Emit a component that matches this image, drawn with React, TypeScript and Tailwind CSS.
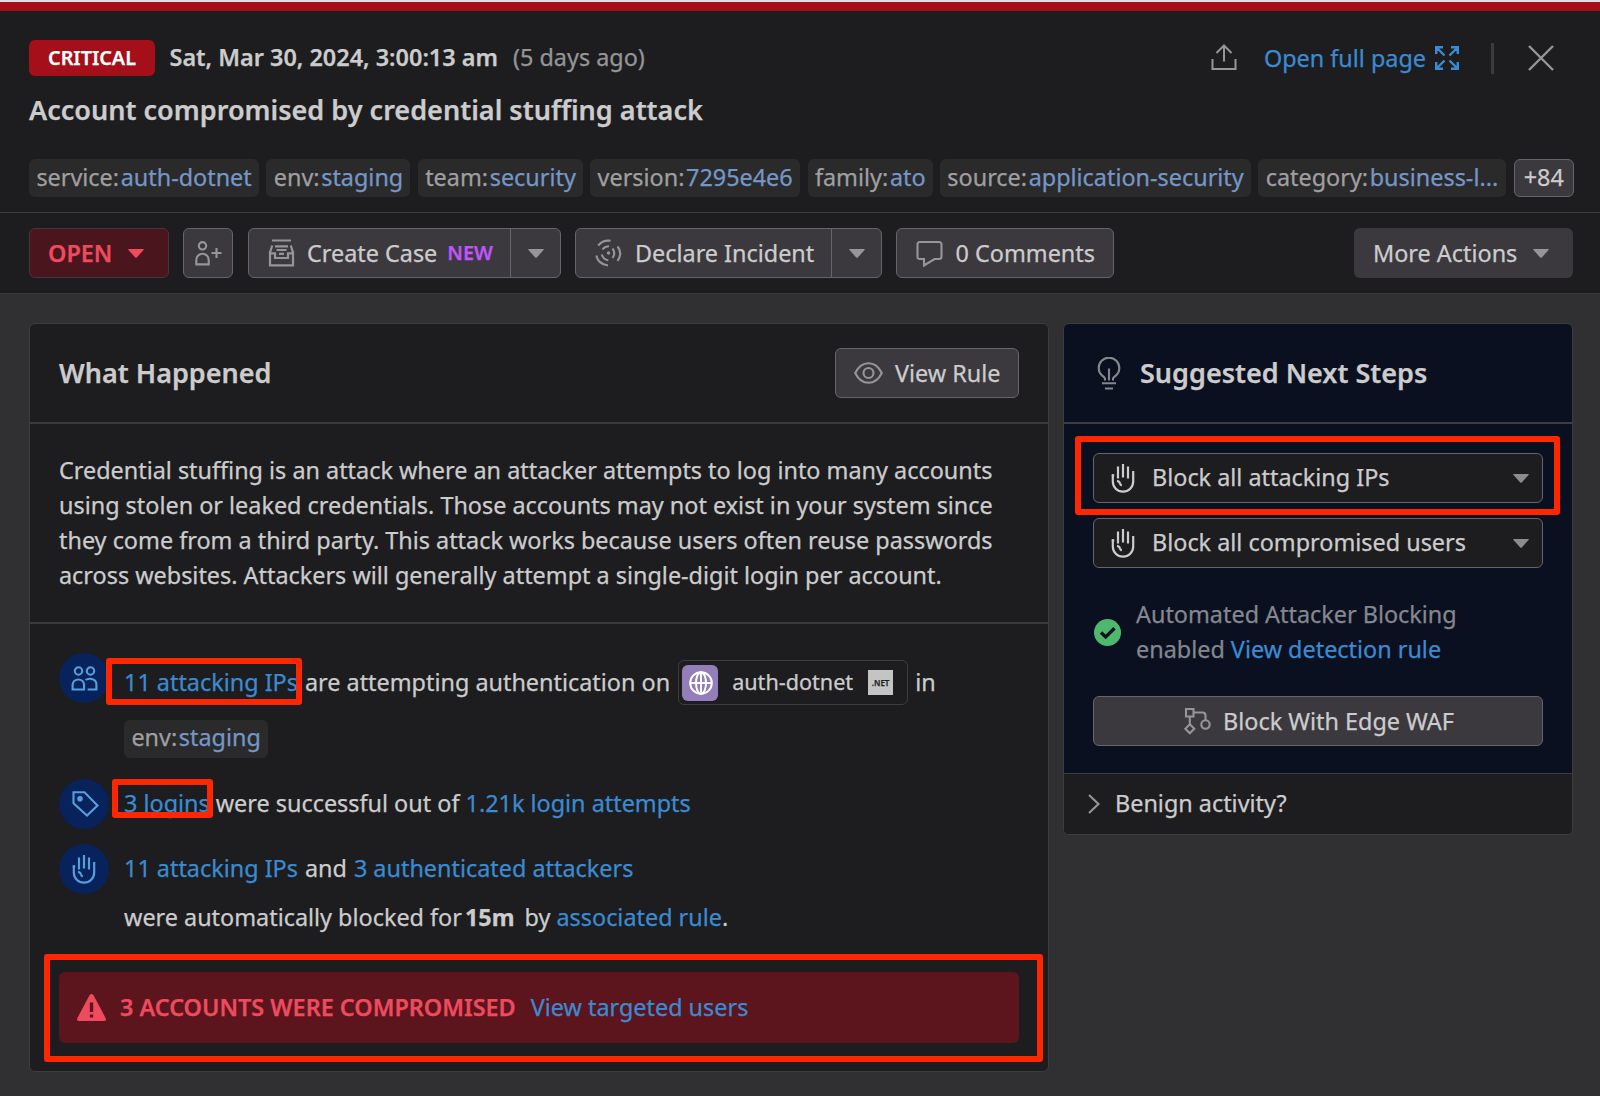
import React from "react";

type IconProps = { className?: string };

const Caret = ({ className = "" }: IconProps) => (
  <svg viewBox="0 0 16 9" className={`h-[9px] w-4 shrink-0 ${className}`} fill="currentColor">
    <path d="M0.8 0H15.2Q16.4 0 15.5 1L9 8.3Q8 9.4 7 8.3L0.5 1Q-0.4 0 0.8 0Z" />
  </svg>
);

const HandIcon = ({ className = "" }: IconProps) => (
  <svg viewBox="0 0 24 29" className={`h-[29px] w-6 shrink-0 ${className}`} fill="none" stroke="currentColor" strokeWidth="2.2">
    <path d="M1.8 10.5V17.5A10.2 10.2 0 0 0 22.2 17.5V7" />
    <path d="M7 14.5V2.5M12 13.5V0M17 14.5V2.5" />
    <path d="M0.8 11.4H3.2M6 16.8Q8.5 17.2 9 19.5Q9.4 21 10.8 21.5" />
  </svg>
);

const ShareIcon = () => (
  <svg viewBox="0 0 26 27" className="mb-[2px] h-[27px] w-[26px] shrink-0" fill="none" stroke="currentColor" strokeWidth="2">
    <path d="M1.5 15V25H24.5V15M13 17.5V2M5.5 9L13 1.5L20.5 9" />
  </svg>
);

const ExpandIcon = () => (
  <svg viewBox="0 0 24 24" className="size-6 shrink-0" fill="none" stroke="currentColor" strokeWidth="2.4">
    <path d="M1.2 8V1.2H8M1.5 1.5L9.5 9.5M16 1.2H22.8V8M22.5 1.5L14.5 9.5M1.2 16V22.8H8M1.5 22.5L9.5 14.5M16 22.8H22.8V16M22.5 22.5L14.5 14.5" />
  </svg>
);

const CloseIcon = () => (
  <svg viewBox="0 0 26 26" className="size-[26px] shrink-0" fill="none" stroke="currentColor" strokeWidth="2.4">
    <path d="M1 1L25 25M25 1L1 25" />
  </svg>
);

const AddUserIcon = () => (
  <svg viewBox="0 0 28 26" className="h-[26px] w-7 shrink-0" fill="none" stroke="currentColor" strokeWidth="2.1">
    <circle cx="8.5" cy="5.8" r="3.7" />
    <path d="M2.3 24.4V20A6.2 6.2 0 0 1 14.7 20V24.4ZM17.5 13H27.5M22.5 8V18" />
  </svg>
);

const CaseIcon = () => (
  <svg viewBox="0 0 27 28" className="h-7 w-[27px] shrink-0" fill="none" stroke="currentColor" strokeWidth="2.2">
    <path d="M4 1.5H23M7 7.3H20M4.2 6.5L2.2 13M22.8 6.5L24.8 13M2 12V26.4H25V12M2 14.4H7V19H20V14.4H25M8.5 11H18.5M11 14.8H16" />
  </svg>
);

const SignalIcon = () => (
  <svg viewBox="0 0 27 28" className="h-7 w-[27px] shrink-0" fill="none" stroke="currentColor" strokeWidth="2.1">
    <circle cx="13.5" cy="14" r="1.7" fill="currentColor" stroke="none" />
    <path d="M3.2 6.5Q8 0.8 15.5 1.8M1.3 16.5Q3 25 13 26.5M22.5 7.5Q28 14 22.5 22M7.5 10.5Q10 7 14 7.2M6.8 15.5Q8.2 20.5 13.3 21.3M17.5 9.5Q21 14 17.5 19" />
  </svg>
);

const CommentIcon = () => (
  <svg viewBox="0 0 27 27" className="size-[27px] shrink-0" fill="none" stroke="currentColor" strokeWidth="2.1">
    <path d="M4 2H23Q25.5 2 25.5 4.5V16.5Q25.5 19 23 19H18.5L8 25.5V19H4Q1.5 19 1.5 16.5V4.5Q1.5 2 4 2Z" />
  </svg>
);

const EyeIcon = () => (
  <svg viewBox="0 0 29 22" className="h-[22px] w-[29px] shrink-0" fill="none" stroke="currentColor" strokeWidth="2.1">
    <path d="M1.2 11Q6 1.2 14.5 1.2T27.8 11Q23 20.8 14.5 20.8T1.2 11Z" />
    <circle cx="14.5" cy="11" r="5" />
  </svg>
);

const BulbIcon = () => (
  <svg viewBox="0 0 24 33" className="h-[33px] w-6 shrink-0" fill="none" stroke="currentColor" strokeWidth="2.1">
    <path d="M8 23.5V21.5Q7.5 20 5 18.5A10.3 10.3 0 1 1 19 18.5Q16.5 20 16 21.5V23.5M12 11.5V23.5M5 26.2H19M8 31.5H16" />
  </svg>
);

const PeopleIcon = () => (
  <svg viewBox="0 0 27 25" className="h-[25px] w-[27px]" fill="none" stroke="currentColor" strokeWidth="2.1">
    <circle cx="7.5" cy="5" r="3.7" />
    <circle cx="19.5" cy="5" r="3.7" />
    <path d="M1.6 23.5V18.5A5.8 5.8 0 0 1 13.1 18.5V23.5ZM14.6 14Q16.600 12.500 19.400 12.700Q25.400 13.200 25.400 18.500V23.500H16.600" />
  </svg>
);

const TagIcon = () => (
  <svg viewBox="0 0 27 26" className="ml-[2px] h-[26px] w-[27px]" fill="none" stroke="currentColor" strokeWidth="2.1">
    <path d="M1.5 1.300H12.500L25.500 14.500L15 24.500L1.500 12.300Z" />
    <circle cx="8" cy="7.8" r="2.8" fill="currentColor" stroke="none" />
  </svg>
);

const WafIcon = () => (
  <svg viewBox="0 0 27 28" className="h-7 w-[27px] shrink-0" fill="none" stroke="currentColor" strokeWidth="2.1">
    <path d="M2 2H9.5V9.5H2ZM9.5 5.5H18.5Q21.5 5.5 21.5 8.5V13M5.8 9.5V17M5.8 17.2L10.3 21.8L5.8 26.3L1.3 21.8Z" />
    <circle cx="21.5" cy="17.5" r="4.2" />
  </svg>
);

const WarnIcon = () => (
  <svg viewBox="0 0 29 27" className="h-[27px] w-[29px] shrink-0">
    <path d="M12.6 1Q14.5 -1 16.4 1L28.6 24Q29.6 27 27 27H2Q-0.6 27 0.4 24Z" fill="currentColor" />
    <path d="M14.5 8.5V18M14.5 20.5V23.5" stroke="#5c151d" strokeWidth="3.4" />
  </svg>
);

const GlobeIcon = () => (
  <svg viewBox="0 0 24 24" className="ml-px size-6" fill="none" stroke="currentColor" strokeWidth="2">
    <circle cx="12" cy="12" r="10.8" />
    <ellipse cx="12" cy="12" rx="5" ry="10.8" />
    <path d="M1.2 12H22.8M12 1V23" />
  </svg>
);

const CheckIcon = () => (
  <svg viewBox="0 0 27 27" className="size-[27px] shrink-0">
    <circle cx="13.5" cy="13.5" r="13.5" fill="#50b86e" />
    <path d="M7 13.5L11.7 18L20.5 9.3" fill="none" stroke="#0a101f" strokeWidth="3.4" />
  </svg>
);

const Tag = ({ k, v, className }: { k: string; v: string; className: string }) => (
  <span className={`flex h-[38px] shrink-0 items-center whitespace-nowrap rounded-md bg-[#2a2a2b] pl-[7.4px] leading-none text-[#a09fa2] ${className}`}>
    {k}:<span className="ml-[1.6px] text-[#7597c8]">{v}</span>
  </span>
);

const Highlight = ({ className }: IconProps) => (
  <span className={`pointer-events-none absolute z-10 rounded-[3px] border-[6px] border-[#ff2600] ${className}`} />
);

const BUTTON = "flex h-[50px] shrink-0 items-center rounded-md border border-[#66656b] bg-[#3b393e] whitespace-nowrap";

const Link = ({ children }: { children: React.ReactNode }) => <span className="text-[#3b8bd2]">{children}</span>;

const Select = ({ label }: { label: string }) => (
  <div className="flex h-[50px] items-center rounded-md border border-[#66656b] bg-[#1d1d1f] pl-[17px] pr-[13px] text-[#cccccd]">
    <HandIcon />
    <span className="ml-[17px] pb-[2px]">{label}</span>
    <Caret className="ml-auto text-[#8c8b8e]" />
  </div>
);

const Bubble = ({ children }: { children: React.ReactNode }) => (
  <span className="flex size-[50px] shrink-0 items-center justify-center rounded-full bg-[#08235b] text-[#559fdf]">{children}</span>
);

export default function App() {
  return (
    <div className="flex h-[1096px] w-[1600px] flex-col overflow-hidden bg-[#303032] font-['Noto_Sans',sans-serif] text-[23.4px] leading-[35px] text-[#cccccd] [-webkit-text-stroke:0.25px]">
      <div className="h-[2px] shrink-0 bg-[#e2dfe3]" />
      <header className="h-[211px] shrink-0 border-b border-t-[9px] border-b-[#3b3b3e] border-t-[#a40f1a] bg-[#1d1d1f] pl-[29px] pr-[27px]">
        <div className="mt-[29px] flex h-9 items-center">
          <span className="flex h-9 w-[126px] items-center justify-center rounded-md bg-[#a40f1a] pb-[2px] text-[19.8px] font-semibold text-white">CRITICAL</span>
          <span className="ml-[14.5px] pb-[2px] text-[23.45px] font-semibold">Sat, Mar 30, 2024, 3:00:13 am</span>
          <span className="ml-[15px] pb-[2px] text-[#969598]">(5 days ago)</span>
          <div className="ml-auto flex items-center text-[#969598]">
            <ShareIcon />
            <span className="ml-[27px] text-[#3b8bd2]">Open full page</span>
            <span className="ml-[9px] text-[#3b8bd2]"><ExpandIcon /></span>
            <span className="ml-8 h-[31px] w-[3px] bg-[#3c3c3f]" />
            <span className="ml-[34px] mr-[19px]"><CloseIcon /></span>
          </div>
        </div>
        <h1 className="mt-[16px] text-[27.05px] font-semibold">Account compromised by credential stuffing attack</h1>
        <div className="mt-[32px] flex gap-[7.4px]">
          <Tag k="service" v="auth-dotnet" className="w-[230px]" />
          <Tag k="env" v="staging" className="w-[144px]" />
          <Tag k="team" v="security" className="w-[165px]" />
          <Tag k="version" v="7295e4e6" className="w-[210px]" />
          <Tag k="family" v="ato" className="w-[125px]" />
          <Tag k="source" v="application-security" className="w-[311px]" />
          <Tag k="category" v="business-l..." className="w-[248px]" />
          <span className="flex h-[38px] w-[60px] shrink-0 items-center justify-center rounded-md border border-[#66656b] bg-[#3b393e] pb-[2px]">+84</span>
        </div>
      </header>

      <div className="flex h-[81px] shrink-0 items-center border-b border-[#3b3b3e] bg-[#1d1d1f] pl-[29px] pr-[27px]">
        <div className="flex h-[50px] w-[140px] items-center rounded-md border border-[#41383d] bg-[#4a151d] pl-[18px] font-semibold text-[#ef4b5f]">
          OPEN<Caret className="ml-4" />
        </div>
        <div className={`${BUTTON} ml-[14px] w-[50px] justify-center text-[#969598]`}><AddUserIcon /></div>
        <div className={`${BUTTON} ml-[15px] w-[313px]`}>
          <span className="ml-[19px] text-[#969598]"><CaseIcon /></span>
          <span className="ml-[12px]">Create Case</span>
          <span className="ml-[10px] pb-[2px] text-[19.8px] font-semibold text-[#bf55fb]">NEW</span>
          <span className="ml-auto flex h-full w-[50px] items-center justify-center border-l border-[#66656b] text-[#969598]"><Caret /></span>
        </div>
        <div className={`${BUTTON} ml-[14px] w-[307px]`}>
          <span className="ml-[19px] text-[#969598]"><SignalIcon /></span>
          <span className="ml-[13px]">Declare Incident</span>
          <span className="ml-auto flex h-full w-[50px] items-center justify-center border-l border-[#66656b] text-[#969598]"><Caret /></span>
        </div>
        <div className={`${BUTTON} ml-[14px] w-[218px]`}>
          <span className="ml-[19px] text-[#969598]"><CommentIcon /></span>
          <span className="ml-[12.5px]">0 Comments</span>
        </div>
        <div className="ml-auto flex h-[50px] w-[219px] items-center rounded-md bg-[#3b393e] pl-[19px]">
          More Actions<Caret className="ml-[16px] text-[#969598]" />
        </div>
      </div>

      <main className="flex items-start gap-[14px] pl-[29px] pt-[29px]">
        <section className="h-[749px] w-[1020px] rounded-md border border-[#3d3d40] bg-[#1d1d1f]">
          <div className="flex h-[100px] items-center justify-between border-b-2 border-[#3b3b3e] pl-[29px] pr-[29px]">
            <h2 className="pb-[2px] text-[27px] font-semibold">What Happened</h2>
            <div className={`${BUTTON} w-[184px] pl-[18px]`}>
              <span className="text-[#969598]"><EyeIcon /></span>
              <span className="ml-[12px]">View Rule</span>
            </div>
          </div>
          <p className="h-[200px] whitespace-nowrap border-b-2 border-[#3b3b3e] pl-[29px] pt-[29px]">
            Credential stuffing is an attack where an attacker attempts to log into many accounts<br />
            using stolen or leaked credentials. Those accounts may not exist in your system since<br />
            they come from a third party. This attack works because users often reuse passwords<br />
            across websites. Attackers will generally attempt a single-digit login per account.
          </p>
          <div className="pl-[29px] pr-[29px] pt-[29px]">
            <div className="flex h-[126px] items-start gap-[15px]">
              <Bubble><PeopleIcon /></Bubble>
              <div className="pt-[7px]">
                <div className="flex h-[45px] items-center whitespace-pre">
                  <span className="relative pb-px"><Link>11 attacking IPs</Link><Highlight className="-left-[18px] -top-[7px] h-[47px] w-[196px]" /></span>
                  <span className="ml-[7px] pb-px">are attempting authentication on</span>
                  <span className="ml-2 flex h-[45px] w-[230px] items-center rounded-md border border-[#3d3d40] pl-[3px]">
                    <span className="flex size-9 items-center justify-center rounded-md bg-[#937eba] text-white"><GlobeIcon /></span>
                    <span className="ml-[14px] pb-[3px] text-[21.6px]">auth-dotnet</span>
                    <span className="ml-[15px] flex size-[25px] items-center justify-center bg-[#c4c4c4] text-[8px] font-semibold text-[#1d1d1f]">.NET</span>
                  </span>
                  <span className="ml-[7px] pb-px">in</span>
                </div>
                <div className="mt-[15px] flex"><Tag k="env" v="staging" className="w-[144px] pb-[2px]" /></div>
              </div>
            </div>
            <div className="flex h-[65px] items-start gap-[15px]">
              <Bubble><TagIcon /></Bubble>
              <div className="flex h-[50px] items-center whitespace-pre">
                <span className="relative pb-px"><Link>3 logins</Link><Highlight className="-left-[12px] -top-[7px] h-[39px] w-[101px]" /></span>
                <span className="ml-[6px] pb-px">were successful out of <Link>1.21k login attempts</Link></span>
              </div>
            </div>
            <div className="flex h-[128px] items-start gap-[15px]">
              <Bubble><HandIcon /></Bubble>
              <div className="leading-[49px]">
                <div><Link>11 attacking IPs</Link><span className="ml-[7px]">and</span><span className="ml-[7px]"><Link>3 authenticated attackers</Link></span></div>
                <div>were automatically blocked for<b className="ml-[3px] font-bold">15m</b><span className="ml-[10px]">by <Link>associated rule</Link>.</span></div>
              </div>
            </div>
            <div className="relative flex h-[71px] items-center rounded-md bg-[#5c151d] pl-[18px]">
              <span className="text-[#ef4b5f]"><WarnIcon /></span>
              <span className="ml-[14px] pb-px font-semibold text-[#ef4b5f]">3 ACCOUNTS WERE COMPROMISED</span>
              <span className="ml-[15px] pb-px"><Link>View targeted users</Link></span>
              <Highlight className="-left-[15px] -top-[18px] h-[108px] w-[999px]" />
            </div>
          </div>
        </section>

        <aside className="h-[512px] w-[510px] overflow-hidden rounded-md border border-[#3d3d40] bg-[#0a101f]">
          <div className="flex h-[100px] items-center border-b-2 border-[#3e3b41] pl-[33px]">
            <span className="text-[#85878f]"><BulbIcon /></span>
            <h2 className="ml-[19px] pb-[2px] text-[27px] font-semibold">Suggested Next Steps</h2>
          </div>
          <div className="h-[350px] border-b border-[#3d3d40] px-[29px] pt-[29px]">
            <div className="relative">
              <Select label="Block all attacking IPs" />
              <Highlight className="-left-[18px] -top-[17px] h-[79px] w-[485px]" />
            </div>
            <div className="mt-[15px]"><Select label="Block all compromised users" /></div>
            <div className="mt-[29px] flex items-center text-[#85878f]">
              <span className="ml-px"><CheckIcon /></span>
              <div className="ml-[15px]">Automated Attacker Blocking<br />enabled <Link>View detection rule</Link></div>
            </div>
            <div className={`${BUTTON} mt-[29px] justify-center pl-[2px]`}>
              <span className="text-[#969598]"><WafIcon /></span>
              <span className="ml-[12px]">Block With Edge WAF</span>
            </div>
          </div>
          <div className="flex h-[60px] items-center bg-[#1d1d1f] pl-[24px]">
            <svg viewBox="0 0 12 20" className="h-5 w-3 text-[#969598]" fill="none" stroke="currentColor" strokeWidth="2.1"><path d="M1 1L10.5 10L1 19" /></svg>
            <span className="ml-[15px] pb-[2px]">Benign activity?</span>
          </div>
        </aside>
      </main>
    </div>
  );
}
